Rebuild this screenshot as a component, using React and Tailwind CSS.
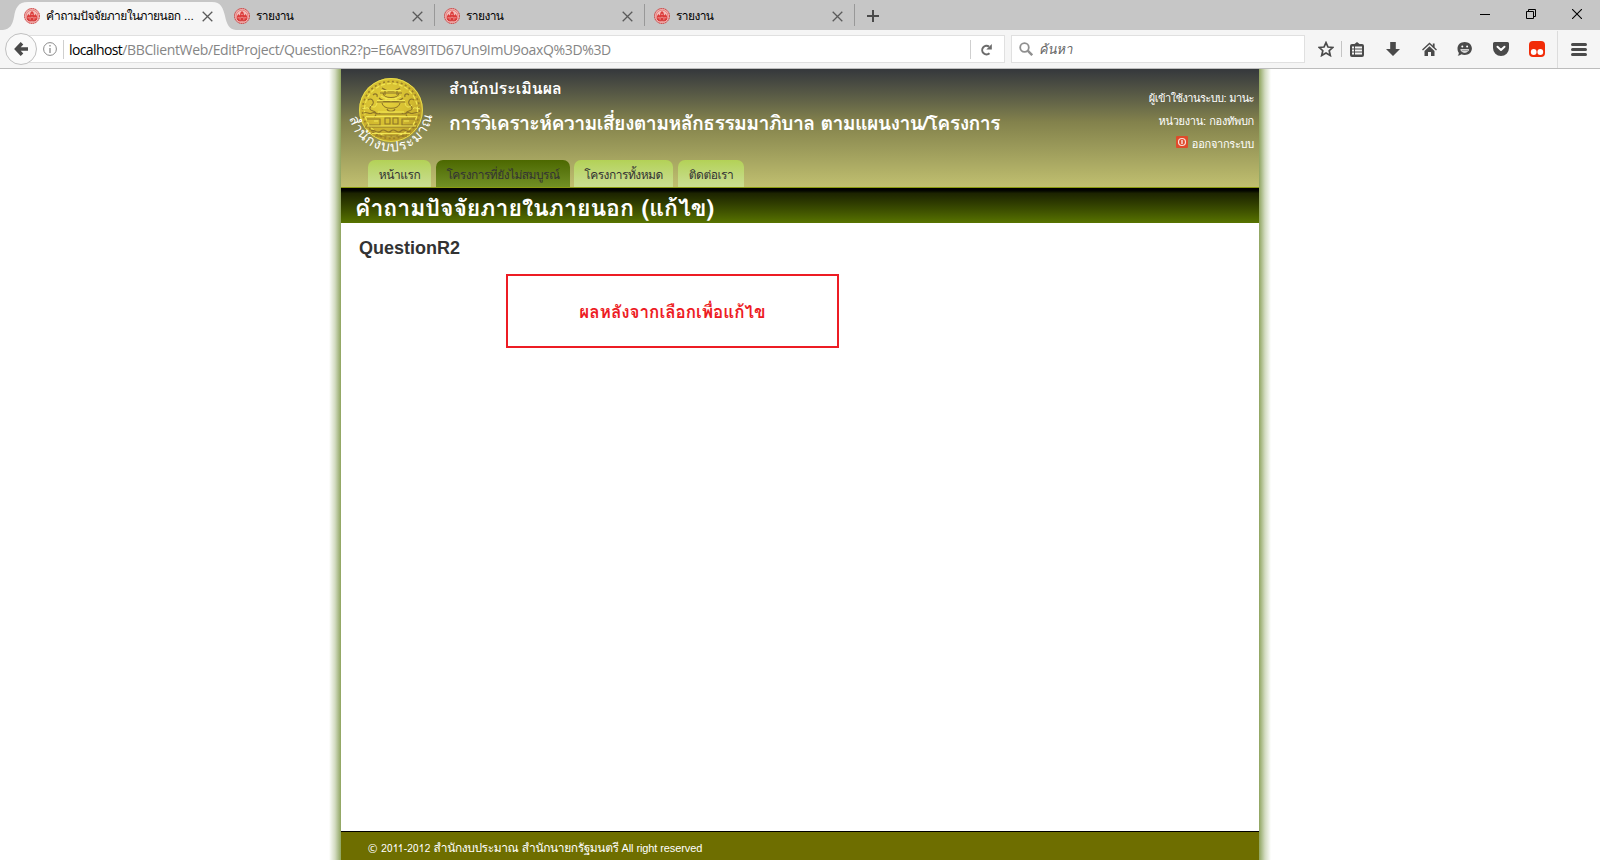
const thai = "font-['Loma','Noto_Sans_Thai',sans-serif]";

function Seal() {
  return (
    <svg className="size-4 shrink-0" viewBox="0 0 16 16">
      <circle cx="8" cy="8" r="7.5" fill="#f3b5b3" stroke="#c9302f" strokeWidth="1" strokeDasharray="1.4 .5" />
      <circle cx="8" cy="8" r="5.9" fill="#f3bfbc" stroke="#e06a68" strokeWidth=".7" />
      <path d="M3 12V8.200L4.300 6 5.800 7.500 6.500 4.500 8 3l1.500 1.500.7 3L11.700 6 13 8.200V12z" fill="#dc3b3a" />
      <path d="M3.500 9.800h2M7 9.300h2M10.500 9.800h2M6.800 6.300h2.400M6.100 12V9M9.900 12V9" stroke="#f5b8b6" strokeWidth=".7" />
      <path d="M4 12.400h8" stroke="#d23635" />
    </svg>
  );
}

function Close() {
  return (
    <svg className="size-[11px] shrink-0" viewBox="0 0 11 11" stroke="#5a5a5a" strokeWidth="1.300">
      <path d="M.7.700l9.600 9.600M10.300.700L.7 10.300" />
    </svg>
  );
}

function BrowserTab() {
  return (
    <div className="flex h-[30px] w-[210px] shrink-0 items-center pl-[9px] pt-[2px]">
      <Seal />
      <span className="ml-[6px] flex-1 text-[12px] leading-[16px] tracking-[-0.6px] text-black">รายงาน</span>
      <Close />
      <i className="-mt-[2px] ml-[11px] h-[22px] w-px bg-[#989898]" />
    </div>
  );
}

function TabStrip() {
  return (
    <div className="flex h-[30px] items-center bg-[#c6c6c6]">
      <div className="relative h-[30px] w-[225px] shrink-0">
        <svg className="absolute left-0 top-0 h-[30px] w-[236px]" viewBox="0 0 236 30" fill="#f5f5f5">
          <path d="M3 30C10 29 12.500 25 14 17 15.500 8 18 2 28 2H212C221 2 223 8 225 16 227 25 229 29 236 30z" />
        </svg>
        <div className="relative flex h-[30px] items-center pl-6 pt-[2px]">
          <Seal />
          <span className="ml-[6px] w-[156px] whitespace-nowrap text-[12px] leading-[16px] tracking-[-0.58px] text-black">คำถามปัจจัยภายในภายนอก <span className="tracking-normal">...</span></span>
          <Close />
        </div>
      </div>
      <BrowserTab />
      <BrowserTab />
      <BrowserTab />
      <svg className="ml-3 mt-[2px] size-3" viewBox="0 0 12 12" stroke="#4a4a4a" strokeWidth="2"><path d="M6 0v12M0 6h12" /></svg>
      <div className="ml-auto flex items-center pr-[18px] pb-[2px]">
        <svg className="h-[11px] w-[10px]" viewBox="0 0 10 11" stroke="#000"><path d="M0 5.500h10" /></svg>
        <svg className="ml-9 size-[10px]" viewBox="0 0 10 10" stroke="#000" fill="none"><path d="M.5 2.500h7v7h-7zM2.500 2.500v-2h7v7h-2" /></svg>
        <svg className="ml-9 size-[10px]" viewBox="0 0 10 10" stroke="#000" strokeWidth="1.100"><path d="M0 0l10 10M10 0L0 10" /></svg>
      </div>
    </div>
  );
}

function Toolbar() {
  return (
    <div className="flex h-[39px] items-center border-b border-[#bcbcbc] bg-[#f5f5f5]">
      <div className="relative z-10 ml-[5px] grid size-8 shrink-0 place-items-center rounded-full border border-[#c0c0c0] bg-[#fafafa]">
        <svg className="h-[14px] w-[14px]" viewBox="0 0 14 14" fill="none" stroke="#4a4a4a" strokeWidth="3.600"><path d="M8 1.300L2.600 7 8 12.700M3 7h11" /></svg>
      </div>
      <div className="-ml-2 flex h-7 w-[976px] shrink-0 items-center border border-[#e0e0e0] bg-white">
        <svg className="ml-[13px] size-[14px]" viewBox="0 0 14 14" fill="none" stroke="#8a8a8a"><circle cx="7" cy="7" r="6.400" /><path d="M7 6v5M7 3v1.600" strokeWidth="1.300" /></svg>
        <i className="ml-[6px] h-[19px] w-px bg-[#cfcfcf]" />
        <span className="ml-[5px] mt-[2px] font-['Open_Sans'] text-[14px] leading-5 tracking-[-0.355px] text-[#858585]"><span className="tracking-[-0.6px] text-black">localhost</span>/BBClientWeb/EditProject/QuestionR2?p=E6AV89ITD67Un9ImU9oaxQ%3D%3D</span>
        <i className="ml-auto h-[19px] w-px bg-[#cfcfcf]" />
        <svg className="ml-[9px] mr-[11px] mt-px h-3 w-[13px]" viewBox="0 0 13 12" fill="none"><path d="M9.500 9.200A4.300 4.300 0 1 1 9 2.600" stroke="#6b6b6b" strokeWidth="2" /><path d="M11.800 0v5.500H6.300z" fill="#6b6b6b" /></svg>
      </div>
      <div className="ml-[6px] flex h-7 w-[294px] shrink-0 items-center border border-[#e0e0e0] bg-white">
        <svg className="ml-[7px] size-[14px]" viewBox="0 0 14 14" fill="none" stroke="#8f8f8f"><circle cx="5.500" cy="5.500" r="4.300" strokeWidth="1.800" /><path d="M8.700 8.700l4.500 4.500" strokeWidth="2.400" /></svg>
        <span className="ml-[6px] mt-[2px] text-[13px] italic text-[#666]">ค้นหา</span>
      </div>
      <svg className="ml-[13px] size-4" viewBox="0 0 16 16" fill="none" stroke="#4a4a4a" strokeWidth="1.700"><path d="M8 1.600l2 4.400 4.800.5-3.600 3.200 1.100 4.800L8 12l-4.300 2.500 1.100-4.800L1.200 6.500 6 6z" /></svg>
      <i className="ml-[7px] h-4 w-px bg-[#c4c4c4]" />
      <svg className="ml-2 h-[15px] w-[14px]" viewBox="0.500 0 14 15"><path d="M2.500 2H5L7.500 0 10 2h2.500a2 2 0 0 1 2 2V13a2 2 0 0 1-2 2h-10a2 2 0 0 1-2-2V4a2 2 0 0 1 2-2z" fill="#4a4a4a" /><path d="M2.500 5.500h2M5.500 5.500h7M2.500 8.500h2M5.500 8.500h7M2.500 11.500h2M5.500 11.500h7" stroke="#f5f5f5" strokeWidth="1.900" /></svg>
      <svg className="ml-[22px] h-[14px] w-[14px]" viewBox="0 0 14 14" fill="#4a4a4a"><path d="M4.200 0h5.600v7H14l-7 7-7-7h4.200z" /></svg>
      <svg className="ml-[22px] h-[15px] w-[15px]" viewBox="0 0 15 15"><path d="M.5 8L7.500 1.500l7 6.500" fill="none" stroke="#4a4a4a" strokeWidth="1.400" /><path d="M10.800 1.500h1.800v4h-1.800z" fill="#4a4a4a" /><path d="M2.500 9l5-4.700L12.500 9v5H9v-4H6v4H2.500z" fill="#4a4a4a" /></svg>
      <svg className="ml-5 h-[14px] w-[15px]" viewBox="0 0 15 14"><path d="M7.700 0c4.100 0 7.200 2.800 7.200 6.500S11.800 13 7.700 13c-1.200 0-2.400-.3-3.300-.8C3.500 13 2.200 13.600.7 13.700c.7-.7 1.100-1.600 1.200-2.800C1 9.800.5 8.300.5 6.500.5 2.800 3.600 0 7.700 0z" fill="#4a4a4a" /><circle cx="5.300" cy="4.600" r="1" fill="#fff" /><circle cx="10.100" cy="4.600" r="1" fill="#fff" /><path d="M3.300 7.300h8.800c-.4 2-2.200 3.500-4.400 3.500S3.700 9.300 3.300 7.300z" fill="#fff" /><path d="M4.500 8.800h6.500" stroke="#4a4a4a" strokeWidth=".7" /></svg>
      <svg className="ml-[21px] h-[14px] w-4" viewBox="0 0 16 14"><path d="M1.500 0h13A1.500 1.500 0 0 1 16 1.500V6A8 8 0 0 1 0 6V1.500A1.500 1.500 0 0 1 1.500 0z" fill="#4a4a4a" /><path d="M4.500 4.700L8 8l3.500-3.300" fill="none" stroke="#fff" strokeWidth="2" strokeLinecap="round" strokeLinejoin="round" /></svg>
      <svg className="ml-5 size-4" viewBox="0 0 16 16"><rect width="16" height="16" rx="4" fill="#f12b07" /><circle cx="4.700" cy="11" r="2.900" fill="#fff" /><circle cx="11.300" cy="11" r="2.900" fill="#fff" /></svg>
      <i className="ml-3 h-[37px] w-px bg-[#dcdcdc]" />
      <svg className="ml-[13px] h-[13px] w-4" viewBox="0 0 16 13" stroke="#4a4a4a" strokeWidth="3" strokeLinecap="round"><path d="M1.500 1.500h13M1.500 6.500h13M1.500 11.500h13" /></svg>
    </div>
  );
}

function Emblem() {
  return (
    <svg className="h-[80px] w-[84px] overflow-visible" viewBox="0 0 84 80">
      <defs>
        <radialGradient id="gold" cx=".42" cy=".36" r=".66">
          <stop offset="0" stopColor="#e6d23c" />
          <stop offset=".6" stopColor="#d3bb30" />
          <stop offset="1" stopColor="#b3952a" />
        </radialGradient>
        <path id="arc" d="M0 40C2 57 20 73 41 73.500S80 57 82 38" />
      </defs>
      <circle cx="41" cy="32" r="32" fill="url(#gold)" />
      <circle cx="41" cy="32" r="31.400" fill="none" stroke="#e9df4c" strokeWidth="1" />
      <circle cx="41" cy="32" r="28.500" fill="none" stroke="#9a8029" strokeWidth="1.600" strokeDasharray="2 2.500" />
      <circle cx="41" cy="32" r="26.500" fill="none" stroke="#f1e650" strokeWidth="1.200" strokeDasharray="4 2" />
      <g fill="none" stroke="#8d7428" strokeWidth="1.100">
        <path d="M32 10c5 4 13 4 18 0M30 15h22M33 15c0 6 16 6 16 0M29 20c5 5 19 5 24 0M27 24h28M32 25c1 7 17 7 18 0M35 12v5M47 12v5M18 22c4-3 7 2 4 5s-3 5 1 6 4 4 1 6M64 22c-4-3-7 2-4 5s3 5-1 6-4 4-1 6M23 17c2-2 5-1 4 2M59 17c-2-2-5-1-4 2M14 35c3-2 5 2 8 0s6 3 8 0M68 35c-3-2-5 2-8 0s-6 3-8 0M27 36h28M17 41h13v6H19M65 41H52v6h11M35 40h5v6h-5zM43 40h5v6h-5zM15 49h52M21 53c3-3 6 4 10 0s6 4 10 0 6 4 10 0 6 3 9 0M25 58h32M37 31c1 3 7 3 8 0" />
      </g>
      <g fill="none" stroke="#f5ec5a" strokeWidth=".9">
        <path d="M31 12.500h20M31 18c6 4 14 4 20 0M27 22.500h28M28 34h26M16 38.500h50M17 48h49M22 55.500h38M36 20v3M46 20v3M20 27c3 3 6 3 7-2M62 27c-3 3-6 3-7-2M24 43h4M54 43h5M12 30c3 2 5-2 7 1M70 30c-3 2-5-2-7 1" />
      </g>
      <text fill="#fff" fontSize="14" fontFamily="Loma, 'Noto Sans Thai', sans-serif">
        <textPath href="#arc" startOffset="0" textLength="117">สำนักงบประมาณ</textPath>
      </text>
    </svg>
  );
}

const navTab = "h-[27px] rounded-t-[7px] bg-linear-to-b from-[#b3d156] to-[#cbde92] text-center text-[12px] leading-[30px] tracking-[-0.5px] text-[#333] whitespace-nowrap";

function Header() {
  return (
    <header className="flex h-[118px] flex-col bg-linear-to-b from-[#35383c] via-[#83824c] via-45% to-[#c1c070]">
      <div className="flex h-[91px] pl-[9px] pr-[5px]">
        <div className="pt-[9px]"><Emblem /></div>
        <div className="ml-[15px] pt-[8px] font-semibold text-white whitespace-nowrap">
          <div className="text-[16px] leading-6">สำนักประเมินผล</div>
          <div className="mt-[9px] text-[19.500px] leading-7 tracking-[-0.62px]">การวิเคราะห์ความเสี่ยงตามหลักธรรมมาภิบาล ตามแผนงาน/โครงการ</div>
        </div>
        <div className="ml-auto pt-[18px] text-right text-[11px] leading-[23px] tracking-[-0.28px] text-white whitespace-nowrap">
          <div className="tracking-[-0.53px]">ผู้เข้าใช้งานระบบ: มานะ</div>
          <div>หน่วยงาน: กองทัพบก</div>
          <div className="flex items-center justify-end gap-1">
            <svg className="mb-[5px] size-3" viewBox="0 0 12 12"><rect width="12" height="12" rx="1" fill="#df4b2b" /><circle cx="6" cy="6" r="3.500" fill="none" stroke="#fbe0da" strokeWidth="1.200" /><path d="M6 4v4" stroke="#fff" strokeWidth="1.200" /></svg>
            <span>ออกจากระบบ</span>
          </div>
        </div>
      </div>
      <nav className="flex h-[27px] pl-[27px]">
        <div className={navTab + " w-[63px]"}>หน้าแรก</div>
        <div className="ml-[5px] h-[27px] w-[134px] rounded-t-[7px] bg-linear-to-b from-[#4c6800] to-[#718f24] text-center text-[12px] leading-[30px] tracking-[-0.55px] text-[#333] whitespace-nowrap">โครงการที่ยังไม่สมบูรณ์</div>
        <div className={navTab + " ml-1 w-[99px]"}>โครงการทั้งหมด</div>
        <div className={navTab + " ml-[5px] w-[66px]"}>ติดต่อเรา</div>
      </nav>
    </header>
  );
}

export default function App() {
  return (
    <div className={"flex h-[860px] w-[1600px] flex-col overflow-hidden bg-white " + thai}>
      <TabStrip />
      <Toolbar />
      <div className="flex flex-1 justify-center">
        <div className="w-3 bg-linear-to-l from-[#8fa45e] via-[#d3dbc1] via-50% to-white" />
        <main className="flex w-[918px] flex-col">
          <Header />
          <div className="h-9 border-t border-[#8a9a10] bg-linear-to-b from-black via-[#1c2300] via-15% to-[#587400] pl-[14px] text-[23px] font-bold leading-[40px] text-white whitespace-nowrap"><span>คำถามปัจจัยภายในภายนอก (แก้ไข)</span></div>
          <h1 className="mt-[14px] pl-[18px] font-['Liberation_Sans'] text-[18px] font-bold leading-[22px] text-[#333]">QuestionR2</h1>
          <div className="ml-[165px] mt-[15px] grid h-[74px] w-[333px] place-items-center border-2 border-[#ed1c24] pt-[2px] text-[17px] font-semibold text-[#ed1c24] whitespace-nowrap"><span>ผลหลังจากเลือกเพื่อแก้ไข</span></div>
          <footer className="mt-auto flex h-[29px] items-baseline gap-[3px] border-t border-black bg-[#6e6e00] pl-[27px] text-[12px] leading-[32px] text-white whitespace-nowrap">
            <span className="text-[10px] tracking-[.25px]">© 2011-2012</span>
            <span className="tracking-[-0.42px]">สำนักงบประมาณ สำนักนายกรัฐมนตรี</span>
            <span className="font-['Liberation_Sans'] text-[11px] tracking-[-0.1px]">All right reserved</span>
          </footer>
        </main>
        <div className="w-3 bg-linear-to-r from-[#8fa45e] via-[#d3dbc1] via-50% to-white" />
      </div>
    </div>
  );
}
